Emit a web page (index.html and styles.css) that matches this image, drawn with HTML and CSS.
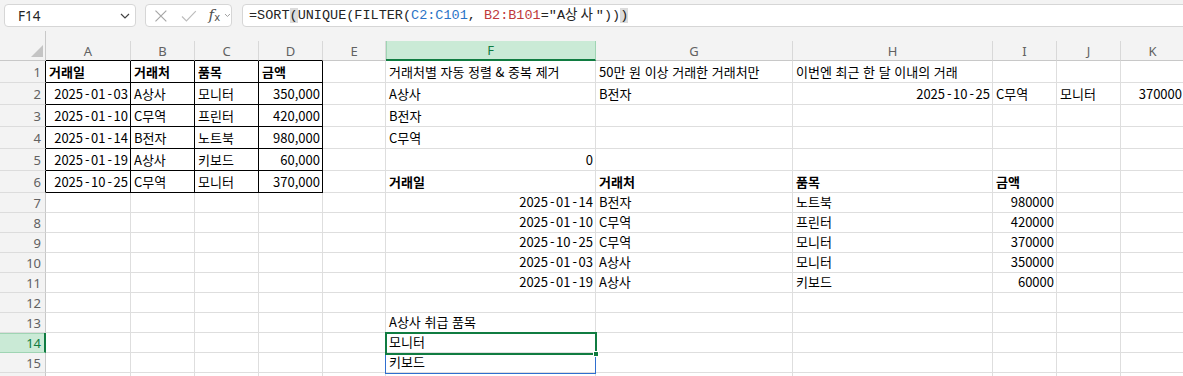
FILE: index.html
```html
<!DOCTYPE html>
<html lang="ko">
<head>
  <meta charset="UTF-8">
  <meta name="viewport" content="width=device-width, initial-scale=1.0">
  <title>거래 내역</title>
  <link rel="stylesheet" href="styles.css">
</head>
<body>
  <div class="toolbar">
    <div class="namebox">
      <span>F14</span>
      <svg width="10" height="6" viewBox="0 0 10 6"><path d="M1 1 L5 5 L9 1" fill="none" stroke="#424242" stroke-width="1.2"/></svg>
    </div>
    <div class="fxbox">
      <svg width="14" height="14" viewBox="0 0 14 14"><path d="M1.5 1.5 L12.5 12.5 M12.5 1.5 L1.5 12.5" stroke="#a6a6a6" stroke-width="1.2"/></svg>
      <svg width="16" height="12" viewBox="0 0 16 12"><path d="M1 6.5 L5.5 11 L15 1" fill="none" stroke="#bdbdbd" stroke-width="1.2"/></svg>
      <span class="fx">f<sub>x</sub></span>
      <svg width="7" height="5" viewBox="0 0 7 5"><path d="M1 1 L3.5 3.5 L6 1" fill="none" stroke="#9e9e9e" stroke-width="1"/></svg>
    </div>
    <div class="formula">=SORT<span class="paren">(</span>UNIQUE(FILTER(<span class="ref1">C2:C101</span>, <span class="ref2">B2:B101</span>="A<span class="wide">상사</span>"))<span class="paren">)</span></div>
  </div>

  <div class="sheet" id="sheet"></div>

  <script>
    const cols = ['A', 'B', 'C', 'D', 'E', 'F', 'G', 'H', 'I', 'J', 'K'];
    const lastRow = 16;

    // '#' = right aligned (number/date), '*' = bold
    const data = {
      1: ['*거래일', '*거래처', '*품목', '*금액', '', '거래처별 자동 정렬 & 중복 제거', '50만 원 이상 거래한 거래처만', '이번엔 최근 한 달 이내의 거래'],
      2: ['#2025-01-03', 'A상사', '모니터', '#350,000', '', 'A상사', 'B전자', '#2025-10-25', 'C무역', '모니터', '#370000'],
      3: ['#2025-01-10', 'C무역', '프린터', '#420,000', '', 'B전자'],
      4: ['#2025-01-14', 'B전자', '노트북', '#980,000', '', 'C무역'],
      5: ['#2025-01-19', 'A상사', '키보드', '#60,000', '', '#0'],
      6: ['#2025-10-25', 'C무역', '모니터', '#370,000', '', '*거래일', '*거래처', '*품목', '*금액'],
      7: ['', '', '', '', '', '#2025-01-14', 'B전자', '노트북', '#980000'],
      8: ['', '', '', '', '', '#2025-01-10', 'C무역', '프린터', '#420000'],
      9: ['', '', '', '', '', '#2025-10-25', 'C무역', '모니터', '#370000'],
      10: ['', '', '', '', '', '#2025-01-03', 'A상사', '모니터', '#350000'],
      11: ['', '', '', '', '', '#2025-01-19', 'A상사', '키보드', '#60000'],
      13: ['', '', '', '', '', 'A상사 취급 품목'],
      14: ['', '', '', '', '', '모니터'],
      15: ['', '', '', '', '', '키보드']
    };

    const active = { col: 'F', row: 14 };

    function el(cls, text) {
      const d = document.createElement('div');
      d.className = cls;
      if (text) d.textContent = text;
      return d;
    }

    // dates: give the dash a little more room, like the sheet font does
    function textNode(v) {
      const t = el('txt');
      v.split('-').forEach((part, i) => {
        if (i > 0) {
          const dash = document.createElement('span');
          dash.className = 'dash';
          dash.textContent = '-';
          t.appendChild(dash);
        }
        t.appendChild(document.createTextNode(part));
      });
      return t;
    }

    function buildSheet() {
      const sheet = document.getElementById('sheet');

      const corner = el('corner');
      corner.innerHTML = '<svg width="12" height="12" viewBox="0 0 12 12"><polygon points="12,0 12,12 0,12" fill="#c4c4c4"/></svg>';
      sheet.appendChild(corner);

      cols.forEach((c, i) => {
        let cls = 'hdr';
        if (i < 4) cls += ' tb-top';
        if (c === active.col) cls += ' hdr-sel';
        sheet.appendChild(el(cls, c));
      });

      for (let r = 1; r <= lastRow; r++) {
        let rcls = 'rh';
        if (r <= 6) rcls += ' tb-left';
        if (r === active.row) rcls += ' rh-sel';
        // last row is only a sliver at the bottom edge
        sheet.appendChild(el(rcls, r < lastRow ? String(r) : ''));

        const row = data[r] || [];
        cols.forEach((c, i) => {
          let v = row[i] || '';
          let cls = 'c';
          if (v.startsWith('#')) { cls += ' num'; v = v.slice(1); }
          if (v.startsWith('*')) { cls += ' bold'; v = v.slice(1); }
          if (i < 4 && r <= 6) cls += ' tb';
          const cell = el(cls);
          if (v) cell.appendChild(textNode(v));
          if (c === active.col && r === active.row) {
            cell.appendChild(el('spill'));
            const box = el('selbox');
            box.appendChild(el('handle'));
            cell.appendChild(box);
          }
          sheet.appendChild(cell);
        });
      }
    }

    buildSheet();
  </script>
</body>
</html>
```

FILE: styles.css
```css
* {
  margin: 0;
  padding: 0;
  box-sizing: border-box;
}

body {
  font-family: "Noto Sans CJK KR", sans-serif;
  background: #fff;
  color: #000;
  width: 1183px;
  height: 376px;
  overflow: hidden;
}

/* formula bar */
.toolbar {
  height: 41px;
  background: #f3f3f3;
  display: flex;
  align-items: flex-start;
  gap: 9px;
  padding: 4px 0 0 4px;
}

.namebox,
.fxbox,
.formula {
  height: 23px;
  background: #fff;
  border: 1px solid #d6d6d6;
  border-radius: 4px;
}

.namebox {
  width: 132px;
  display: flex;
  align-items: center;
  justify-content: space-between;
  padding: 0 5px 0 13px;
  font: 13.5px "Noto Sans", sans-serif;
  color: #242424;
}

.fxbox {
  width: 87px;
  display: flex;
  align-items: center;
  padding: 0 0 0 8px;
}

.fxbox svg:nth-child(2) {
  margin-left: 13px;
}

.fx {
  margin-left: 12px;
  font: italic 15px "DejaVu Serif", serif;
  color: #505050;
  line-height: 1;
}

.fx sub {
  font-size: 10px;
  font-style: normal;
  font-family: "DejaVu Sans", sans-serif;
  vertical-align: -1px;
}

.fxbox svg:last-child {
  margin-left: 4px;
}

.formula {
  flex: 1;
  margin-left: 1px;
  margin-right: -10px;
  padding: 0 0 0 6px;
  font: 13.5px "Liberation Mono", "Noto Sans CJK KR", monospace;
  line-height: 21px;
  color: #242424;
  white-space: nowrap;
}

.formula .wide {
  letter-spacing: 3px;
}

.paren {
  background: #dcdcdc;
}

.ref1 {
  color: #2b74c7;
}

.ref2 {
  color: #c0393b;
}

/* grid */
.sheet {
  display: grid;
  grid-template-columns: 46px 85px 64px 64px 64px 63px 210px 197px 200px 64px 64px 64px;
  grid-template-rows: 20px repeat(6, 22px) repeat(10, 20px);
}

.corner {
  position: relative;
  background: #f3f3f3;
  border-right: 1px solid #c8c8c8;
  border-bottom: 1px solid #c8c8c8;
  display: flex;
  align-items: flex-end;
  justify-content: flex-end;
  padding: 0 2px 3px 0;
}

.corner::before {
  content: "";
  position: absolute;
  right: -1px;
  top: -10px;
  height: 10px;
  border-right: 1px solid #c8c8c8;
}

.hdr {
  background: #f3f3f3;
  border-right: 1px solid #d8d8d8;
  border-bottom: 1px solid #c8c8c8;
  font: 13px "Noto Sans", sans-serif;
  color: #616161;
  display: flex;
  align-items: center;
  justify-content: center;
  line-height: 1;
  padding-top: 1px;
}

.hdr.tb-top {
  border-bottom-color: #000;
}

.hdr-sel {
  background: #caead6;
  color: #107c41;
  border-bottom: 2px solid #107c41;
  box-shadow: inset 1px 0 0 #9fd4b3;
  border-right-color: #9fd4b3;
}

.rh {
  background: #f3f3f3;
  border-right: 1px solid #c8c8c8;
  border-bottom: 1px solid #dcdcdc;
  font: 13px "Noto Sans", sans-serif;
  color: #616161;
  display: flex;
  align-items: center;
  justify-content: flex-end;
  padding: 1px 4px 0 0;
  line-height: 1;
}

.rh.tb-left {
  border-right-color: #000;
}

.rh-sel {
  background: #caead6;
  color: #107c41;
  border-right: 2px solid #107c41;
  border-bottom-color: #9fd4b3;
  box-shadow: inset 0 1px 0 #9fd4b3;
  padding-right: 3px;
}

.c {
  position: relative;
  border-right: 1px solid #dedede;
  border-bottom: 1px solid #dedede;
  display: flex;
  align-items: flex-end;
  padding: 0 3px 1px;
  font-size: 13px;
  white-space: nowrap;
}

.c.tb {
  border-right-color: #000;
  border-bottom-color: #000;
}

.c.num {
  justify-content: flex-end;
  padding-right: 2px;
}

.c.bold {
  font-weight: 700;
}

.txt {
  line-height: 18px;
}

.dash {
  padding: 0 1.5px 0 2px;
}

/* active cell and spill range */
.selbox {
  position: absolute;
  left: -1px;
  top: -1px;
  width: 212px;
  height: 23px;
  border: 2px solid #107c41;
  z-index: 3;
}

.handle {
  position: absolute;
  right: -4px;
  bottom: -4px;
  width: 6px;
  height: 6px;
  background: #107c41;
  border: 1px solid #fff;
}

.spill {
  position: absolute;
  left: -1px;
  top: -1px;
  width: 211px;
  height: 42px;
  border: 1px solid #2f6fcf;
  z-index: 2;
}
```
